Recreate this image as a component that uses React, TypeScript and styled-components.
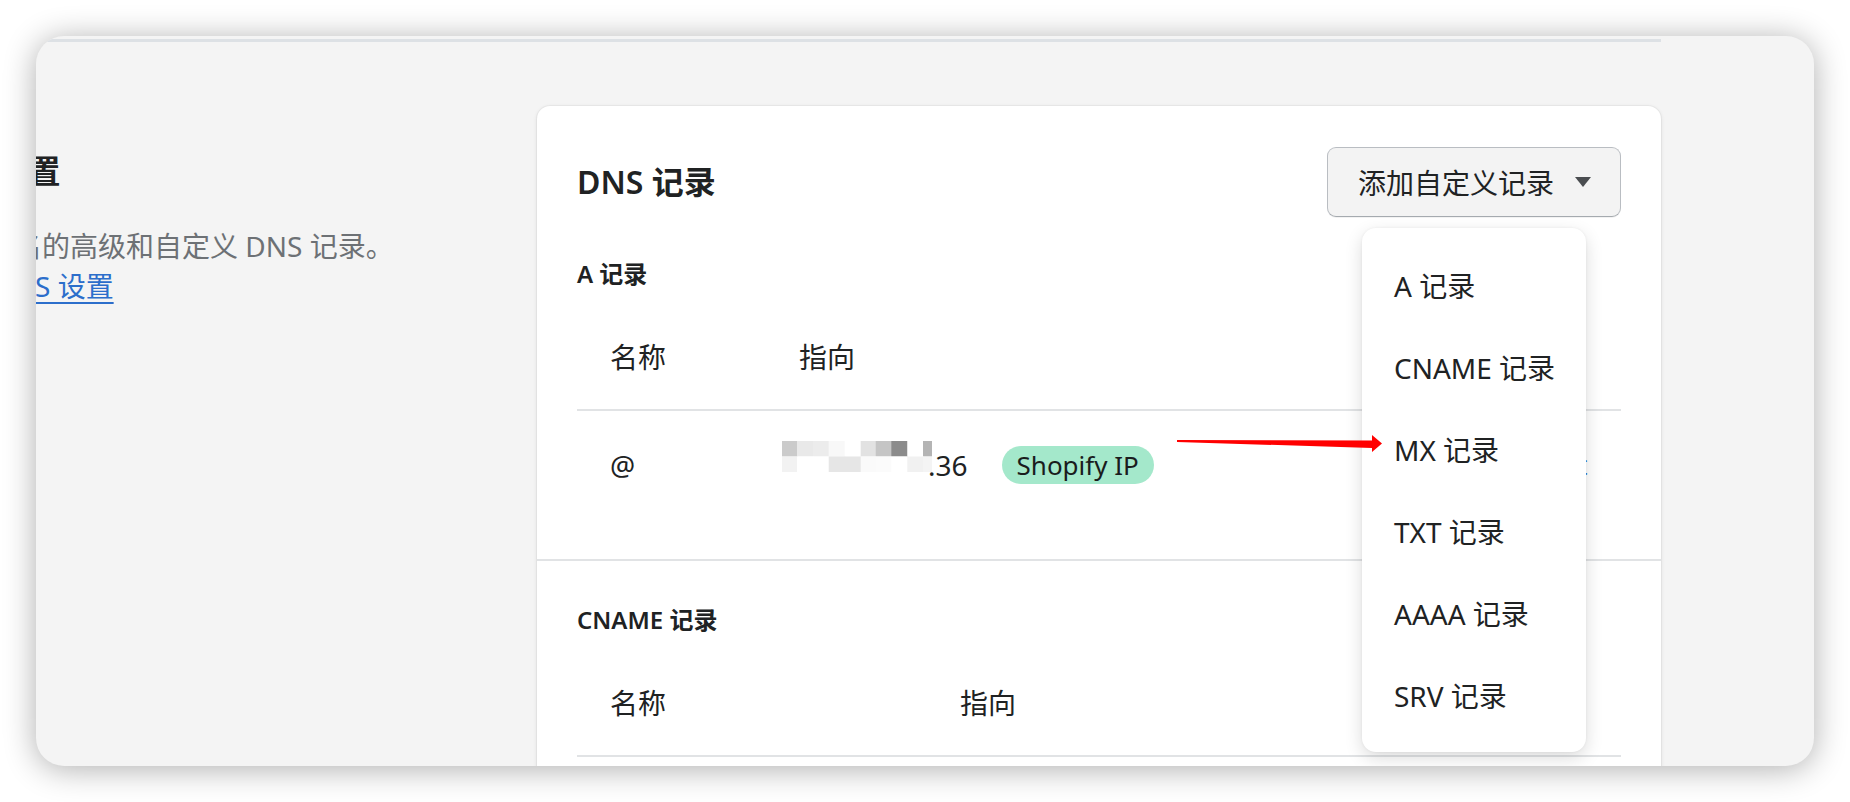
import styled, { createGlobalStyle } from 'styled-components';

const GlobalStyle = createGlobalStyle`
  * { box-sizing: border-box; }
  html, body {
    margin: 0;
    padding: 0;
    background: #ffffff;
    font-family: "Noto Sans", "Noto Sans CJK SC", sans-serif;
    color: #202223;
  }
`;

const menuItems = ['A 记录', 'CNAME 记录', 'MX 记录', 'TXT 记录', 'AAAA 记录', 'SRV 记录'];

// redacted IP, two rows of grey blocks
const mosaicCols = [0, 15, 31, 46.7, 62.7, 78.7, 93.7, 109.3, 125.3, 141, 150];
const mosaicRows = [
  ['#cbcbcb', '#e9e9e9', '#ececec', '#f8f8f8', '#ffffff', '#e2e2e2', '#c5c5c5', '#8b8b8b', '#ffffff', '#b4b4b4'],
  ['#f2f2f2', '#ffffff', '#ffffff', '#e6e6e6', '#e6e6e6', '#fafafa', '#fbfbfb', '#ffffff', '#f1f1f1', '#f4f4f4'],
];

const App = () => {
  return (
    <>
      <GlobalStyle />
      <Page>
        <Window>
          <Layout>
            <TopRule />
            <SettingsRow>
              <Aside>
                <AsideTitle>DNS设置</AsideTitle>
                <AsideText>
                  管理域名的高级和自定义 DNS 记录。
                  <br />
                  <AsideLink href="#">了解 DNS 设置</AsideLink>
                </AsideText>
              </Aside>

              <Card>
                <CardHeader>
                  <CardTitle>DNS 记录</CardTitle>
                  <ButtonWrap>
                    <AddButton type="button">
                      添加自定义记录
                      <svg width="16" height="10" viewBox="0 0 16 10">
                        <path d="M0 0 H16 L8 10 Z" fill="#4a4d50" />
                      </svg>
                    </AddButton>
                    <Menu>
                      {menuItems.map((item) => (
                        <MenuItem key={item}>{item}</MenuItem>
                      ))}
                    </Menu>
                  </ButtonWrap>
                </CardHeader>

                <Section>
                  <SectionTitle>A 记录</SectionTitle>
                  <Grid $nameCol={189}>
                    <HeadCell>名称</HeadCell>
                    <HeadCell>指向</HeadCell>
                    <HeadCell />
                    <Cell>@</Cell>
                    <Cell>
                      <Mosaic width="150" height="31" viewBox="0 0 150 31">
                        {mosaicRows.map((row, r) =>
                          row.map((c, i) => (
                            <rect
                              key={`${r}-${i}`}
                              x={mosaicCols[i]}
                              y={r * 15.5}
                              width={mosaicCols[i + 1] - mosaicCols[i] + 0.5}
                              height={15.5}
                              fill={c}
                            />
                          ))
                        )}
                      </Mosaic>
                      .36
                      <Badge>Shopify IP</Badge>
                    </Cell>
                    <Cell $right>
                      <EditLink href="#">编辑</EditLink>
                    </Cell>
                  </Grid>
                </Section>

                <Section $divided>
                  <SectionTitle>CNAME 记录</SectionTitle>
                  <Grid $nameCol={350}>
                    <HeadCell>名称</HeadCell>
                    <HeadCell>指向</HeadCell>
                    <HeadCell />
                  </Grid>
                </Section>
              </Card>
            </SettingsRow>
          </Layout>
        </Window>

        <Arrow width="206" height="18" viewBox="0 0 206 18">
          <path d="M0 5 L195 5.5 L195 0 L205 8.5 L195 17 L195 13 L0 7 Z" fill="#ff0000" />
        </Arrow>
      </Page>
    </>
  );
};

const Page = styled.div`
  position: relative;
  width: 1850px;
  height: 802px;
  padding: 36px;
  background: #ffffff;
`;

const Window = styled.div`
  height: 730px;
  border-radius: 28px;
  background: #f4f4f4;
  overflow: hidden;
  box-shadow: 0 3px 32px rgba(0, 0, 0, 0.32);
`;

const Layout = styled.div`
  width: 1731px;
  margin-left: -106px;
  padding-top: 3px;
`;

const TopRule = styled.div`
  height: 3px;
  background: #dde1e5;
`;

const SettingsRow = styled.div`
  display: flex;
  gap: 42px;
  padding-top: 64px;
`;

const Aside = styled.div`
  width: 565px;
  flex-shrink: 0;
  padding-top: 45px;
`;

const AsideTitle = styled.h2`
  margin: 0;
  font-size: 32px;
  line-height: 40px;
  font-weight: 600;
  color: #202223;
`;

const AsideText = styled.p`
  margin: 35px 0 0;
  font-size: 28px;
  line-height: 40px;
  color: #6d7175;
`;

const AsideLink = styled.a`
  color: #2c6ecb;
  text-decoration: underline;
  text-underline-offset: 5px;
`;

const Card = styled.div`
  flex: 1;
  min-height: 700px;
  background: #ffffff;
  border-radius: 13px;
  box-shadow: 0 0 0 1px rgba(0, 0, 0, 0.03), 0 1px 4px rgba(0, 0, 0, 0.1);
`;

const CardHeader = styled.div`
  display: flex;
  align-items: center;
  justify-content: space-between;
  padding: 41px 40px 0;
`;

const CardTitle = styled.h2`
  margin: 0;
  font-size: 32px;
  line-height: 40px;
  font-weight: 600;
`;

const ButtonWrap = styled.div`
  position: relative;
`;

const AddButton = styled.button`
  display: flex;
  align-items: center;
  gap: 21px;
  height: 70px;
  padding: 0 29px 0 30px;
  border: 1.5px solid #b9bdc2;
  border-bottom-color: #a5aaaf;
  border-radius: 9px;
  background: #f3f3f3;
  font-family: inherit;
  font-size: 28px;
  color: #202223;
  box-shadow: 0 1px 0 rgba(0, 0, 0, 0.05);
`;

const Menu = styled.div`
  position: absolute;
  z-index: 5;
  top: calc(100% + 11px);
  right: 35px;
  width: 224px;
  padding: 16px 0;
  background: #ffffff;
  border-radius: 14px;
  box-shadow: 0 0 3px rgba(0, 0, 0, 0.06), 0 6px 18px rgba(0, 0, 0, 0.14);
`;

const MenuItem = styled.div`
  display: flex;
  align-items: center;
  height: 82px;
  padding: 0 32px;
  font-size: 28px;
  color: #202223;
  white-space: nowrap;
`;

const Section = styled.div<{ $divided?: boolean }>`
  padding: 41px 40px 40px;
  border-top: ${(p) => (p.$divided ? '2px solid #e1e3e5' : 'none')};
  padding-top: ${(p) => (p.$divided ? '43px' : '41px')};
`;

const SectionTitle = styled.h3`
  margin: 0;
  font-size: 24px;
  line-height: 32px;
  font-weight: 600;
`;

const Grid = styled.div<{ $nameCol: number }>`
  display: grid;
  grid-template-columns: ${(p) => p.$nameCol}px 1fr auto;
  margin-top: 13px;
  font-size: 28px;
  line-height: 40px;
`;

const HeadCell = styled.div`
  padding: 34px 33px 32px;
  border-bottom: 2px solid #e1e3e5;
`;

const Cell = styled.div<{ $right?: boolean }>`
  display: flex;
  align-items: center;
  justify-content: ${(p) => (p.$right ? 'flex-end' : 'flex-start')};
  padding: 34px 33px;
`;

const Mosaic = styled.svg`
  flex-shrink: 0;
  margin: -17px -4px 0 -17px;
`;

const Badge = styled.span`
  display: inline-flex;
  align-items: center;
  height: 38px;
  margin-left: 34px;
  padding: 0 15px;
  border-radius: 19px;
  background: #a4e8cb;
  font-size: 26px;
  color: #1a1c1d;
`;

const EditLink = styled.a`
  color: #2c6ecb;
  text-decoration: none;
`;

const Arrow = styled.svg`
  position: absolute;
  z-index: 10;
  left: 1177px;
  top: 435px;
`;

export default App;
